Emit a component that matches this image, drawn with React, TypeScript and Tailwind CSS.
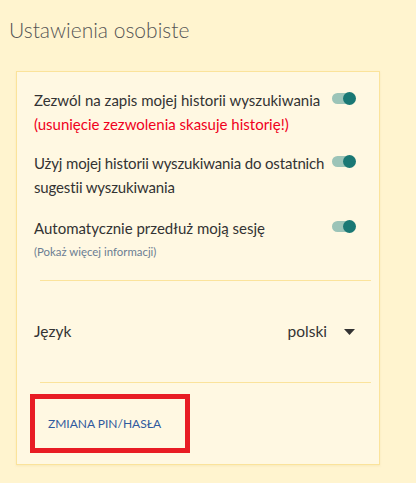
import React from 'react';

const Toggle: React.FC = () => (
  <div className="relative mt-[4px] h-[13px] w-[25px] shrink-0">
    <div className="absolute left-0 top-[1px] h-[11px] w-[22px] rounded-full bg-[#9cc4b8]" />
    <div className="absolute right-[1px] top-0 h-[13px] w-[13px] rounded-full bg-[#1a7874]" />
  </div>
);

const SettingRow: React.FC<{ label: string; tight?: boolean; children?: React.ReactNode }> = ({ label, tight, children }) => (
  <div className="flex items-start justify-between pr-[22px]">
    <div className="w-[298px]">
      <p className={tight ? 'text-[15px] leading-[24px] tracking-[-0.15px] text-[#333]' : 'text-[15px] leading-[24px] text-[#333]'}>{label}</p>
      {children}
    </div>
    <Toggle />
  </div>
);

export default function App() {
  return (
    <div className="min-h-[483px] w-[416px] bg-[#fff4cf] font-['Lato','Noto_Sans',sans-serif]">
      <h1 className="pl-[9px] pt-[16px] text-[21px] font-light leading-[28px] text-[#555]">Ustawienia osobiste</h1>

      <div className="ml-4 mt-[27px] w-[364px] border border-[#fbe39b] bg-[#fff8e2] shadow-[0_1px_2px_rgba(200,170,80,0.15)]">
        <div className="pl-[17px] pt-[16px]">
          <SettingRow label="Zezwól na zapis mojej historii wyszukiwania">
            <p className="text-[15px] leading-[24px] text-[#f0001c]">(usunięcie zezwolenia skasuje historię!)</p>
          </SettingRow>
          <div className="mt-[15px]">
            <SettingRow tight label="Użyj mojej historii wyszukiwania do ostatnich sugestii wyszukiwania" />
          </div>
          <div className="mt-[17px]">
            <SettingRow label="Automatycznie przedłuż moją sesję">
              <p className="mt-[3px] text-[11.4px] leading-[18px] text-[#6b7d92]">(Pokaż więcej informacji)</p>
            </SettingRow>
          </div>
        </div>

        <div className="ml-[23px] mr-[8px] mt-[19px] border-t border-[#fbe39b]" />

        <div className="flex h-[101px] items-center justify-between pl-[17px] pr-[24px]">
          <span className="text-[15.5px] text-[#333]">Język</span>
          <div className="flex items-center gap-[17px]">
            <span className="text-[15.5px] text-[#333]">polski</span>
            <svg width="11" height="6" viewBox="0 0 11 6">
              <path d="M0 0h11L5.5 6z" fill="#333" />
            </svg>
          </div>
        </div>

        <div className="ml-[23px] mr-[8px] border-t border-[#fbe39b]" />

        <div className="pb-[11px] pl-[13px] pt-[11px]">
          <div className="flex h-[59px] w-[160px] items-center border-[5px] border-[#e81c24] pl-[13px]">
            <a className="text-[12px] text-[#2f5a9e]">ZMIANA PIN/HASŁA</a>
          </div>
        </div>
      </div>
    </div>
  );
}
